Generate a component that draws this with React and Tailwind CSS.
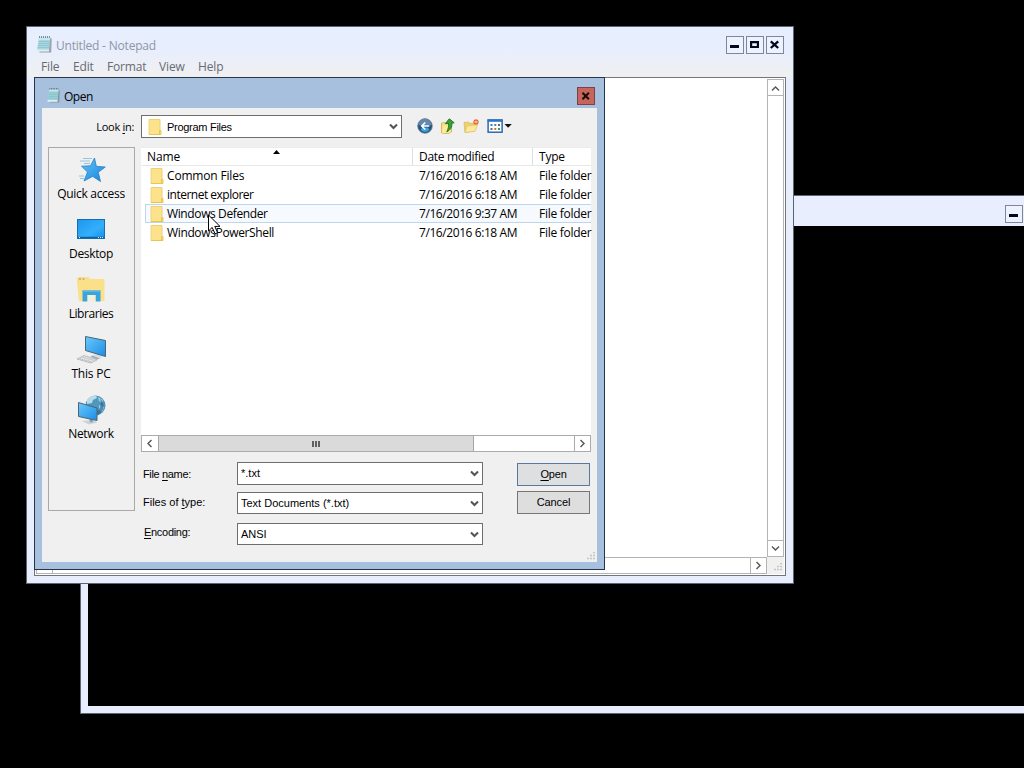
import React from 'react';
import clsx from 'clsx';

const files = [
  { name: 'Common Files', date: '7/16/2016 6:18 AM', type: 'File folder', tracking: 'tracking-[-0.18px]' },
  { name: 'internet explorer', date: '7/16/2016 6:18 AM', type: 'File folder', tracking: 'tracking-[-0.5px]' },
  { name: 'Windows Defender', date: '7/16/2016 9:37 AM', type: 'File folder', tracking: 'tracking-[-0.38px]', hover: true },
  { name: 'WindowsPowerShell', date: '7/16/2016 6:18 AM', type: 'File folder', tracking: 'tracking-[-0.36px]' },
];

const NotepadIcon = ({ className }) => (
  <svg viewBox="0 0 16 17" preserveAspectRatio="none" className={className}>
    <path d="M14 2L15.7 2.5L15.2 16.5L4 16.5L3 15.5Z" fill="#8d959c" />
    <path d="M3 1.5H14.3L13 15H0.8Z" fill="#9fd3dc" />
    <path d="M3 1.5H14.3L14 4H2.6Z" fill="#c3e6ec" />
    <path d="M2.6 5.5H13.6M2.4 7.5H13.4M2.1 9.5H13.2M1.8 11.5H13" stroke="#79b8c6" strokeWidth="0.7" />
    <path d="M0.8 13.5L13 13.8L12.9 15.5H0.6Z" fill="#dff2f4" />
    <path d="M3 1H15" stroke="#4b5a68" strokeWidth="1.6" strokeDasharray="1 1" />
  </svg>
);

const FolderIcon = ({ className }) => (
  <svg viewBox="0 0 14 16" className={className}>
    <path d="M1 0.5H12V11H13V15.5H1Z" fill="#fbe28b" />
    <path d="M1 0.5H12V11" fill="none" stroke="#ecd07a" strokeWidth="1" />
    <path d="M0.8 15.5H13V11.5H11.5V15" fill="none" stroke="#e8c54c" strokeWidth="1" />
    <path d="M1 0.5V15" stroke="#edcf74" strokeWidth="0.8" />
  </svg>
);

const Chevron = ({ className, d = 'M1 1.5L4.5 5L8 1.5', width = 2.1 }) => (
  <svg viewBox="0 0 9 7" className={clsx('h-[7px] w-[9px]', className)}>
    <path d={d} fill="none" stroke="#555" strokeWidth={width} />
  </svg>
);

const StarIcon = () => (
  <svg viewBox="0 0 32 32" className="h-8 w-8">
    <defs>
      <linearGradient id="star" x1="0" y1="0" x2="1" y2="1">
        <stop offset="0" stopColor="#62c5fb" />
        <stop offset="1" stopColor="#1583db" />
      </linearGradient>
    </defs>
    <path d="M8 4.5H17M5 7H15M9 9.5H15M4 22H9M5 24.5H9" stroke="#8fbcdc" strokeWidth="0.9" />
    <path d="M19.5 4L21.3 12.3L30.3 13L23.3 18.3L25.5 27.5L17.7 22.4L9 27L12.5 18L6.5 12.2L15.5 11.8Z" fill="url(#star)" stroke="#2d7fbf" strokeWidth="0.8" />
  </svg>
);

const DesktopIcon = () => (
  <svg viewBox="0 0 32 32" className="h-8 w-8">
    <defs>
      <linearGradient id="desk" x1="0" y1="0" x2="1" y2="1">
        <stop offset="0" stopColor="#1c96ee" />
        <stop offset="0.6" stopColor="#35aefb" />
        <stop offset="1" stopColor="#1390ee" />
      </linearGradient>
    </defs>
    <rect x="2.5" y="5.5" width="27" height="19" fill="url(#desk)" stroke="#1670b0" />
    <path d="M3 23.5H29" stroke="#0d5f9e" strokeWidth="1.4" />
    <path d="M4 23.5H6M23 23.5H28.5" stroke="#d9efff" strokeWidth="1" strokeDasharray="1 1" />
  </svg>
);

const LibrariesIcon = () => (
  <svg viewBox="0 0 32 32" className="h-8 w-8">
    <path d="M2 4.5Q2 3 3.5 3H13.5L15 5H28Q29.5 5 29.5 6.5V27H4L2 8Z" fill="#fbe08a" />
    <path d="M4 5H11" stroke="#8a8f8c" strokeWidth="1.2" strokeDasharray="2 1.5" />
    <path d="M7.5 16.5H25.5V27.5H20.5V21H12.5V27.5H7.5Z" fill="#39a5dc" />
    <path d="M7.5 16.5H25.5V18H7.5Z" fill="#55b7e6" />
    <path d="M12.5 21H20.5V28H12.5Z" fill="#f4efdc" />
  </svg>
);

const Screen = ({ id, d, stroke = '#4c6474' }) => (
  <>
    <defs>
      <linearGradient id={id} x1="0" y1="0" x2="1" y2="1">
        <stop offset="0" stopColor="#6cc9fb" />
        <stop offset="1" stopColor="#1a8de6" />
      </linearGradient>
    </defs>
    <path d={d} fill={`url(#${id})`} stroke={stroke} strokeWidth="1" />
  </>
);

const PcIcon = () => (
  <svg viewBox="0 0 32 32" className="h-8 w-8">
    <path d="M16 22L24 19L27 24L19 25.5Z" fill="#d7dde1" />
    <path d="M17 21.5L25 24.5L22 25.5L15.5 22.5Z" fill="#a4adb3" />
    <path d="M2 25L9 21.5L22 25.8L16 29Z" fill="#e4e7e9" stroke="#a9afb3" strokeWidth="0.8" />
    <path d="M5 24.8L17 27.8M7.5 23.2L19.3 26.5" stroke="#9aa1a6" strokeWidth="0.7" strokeDasharray="1.3 0.7" />
    <Screen id="pc" d="M10.5 2.5L30.5 6.5V22.5L10.5 16.5Z" />
  </svg>
);

const NetworkIcon = () => (
  <svg viewBox="0 0 32 32" className="h-8 w-8">
    <circle cx="20.5" cy="11.5" r="10" fill="#4e97bf" />
    <path d="M12 6Q15 1.5 21 1.5L22 4L18 6L17 9L12 10Z" fill="#b7dbe8" />
    <path d="M23 3L28 6L27 9L24 7ZM24 11L29 13L27 18L24 16Z" fill="#a6d0e0" />
    <path d="M25 4.5A10 10 0 0 1 22 21.3L20 19Q28 14 25 4.5Z" fill="#27638c" opacity="0.65" />
    <path d="M7 27L19 26L22 28.5L14 30.5Z" fill="#c8d2d8" />
    <path d="M14 24L18 25.5L17.5 28.5L15 28Z" fill="#8e9ba3" />
    <Screen id="net" d="M3.5 8.5L22 14V26.5L3.5 22.5Z" />
  </svg>
);

const places = [
  { label: 'Quick access', icon: <StarIcon />, tracking: 'tracking-[-0.3px]' },
  { label: 'Desktop', icon: <DesktopIcon />, tracking: 'tracking-[-0.35px]' },
  { label: 'Libraries', icon: <LibrariesIcon />, tracking: 'tracking-[-0.45px]' },
  { label: 'This PC', icon: <PcIcon />, tracking: 'tracking-[-0.2px]' },
  { label: 'Network', icon: <NetworkIcon />, tracking: 'tracking-[-0.3px]' },
];

const BackIcon = () => (
  <svg viewBox="0 0 16 16" className="h-4 w-4">
    <circle cx="8" cy="8" r="7.3" fill="#24527f" stroke="#6f8496" strokeWidth="0.8" />
    <path d="M1.5 7A6.5 6.5 0 0 1 14.5 7Q8 9 1.5 7Z" fill="#6687a8" />
    <path d="M3.5 12Q8 16 12.5 12L11 9.5H5Z" fill="#37a2dc" />
    <path d="M8.3 4.5L4.8 8L8.3 11.5M5 8H12.3" fill="none" stroke="#fff" strokeWidth="1.7" />
  </svg>
);

const UpIcon = () => (
  <svg viewBox="0 0 16 16" className="h-4 w-4">
    <path d="M1.5 5L4.5 4.5L6 5.8L11.5 5V14L8 15.7L1.5 15Z" fill="#f7e07c" stroke="#d2ae45" strokeWidth="0.8" />
    <path d="M3 8L11.8 7L10 14.8L2 15Z" fill="#fbec9c" />
    <path d="M9.3 0.8L14.2 4.8L11.8 5.2C12.3 9 10.5 12 6.8 13.8C8.3 10.5 9 8 8.3 5.4L5.3 5.6Z" fill="#3da035" stroke="#1d6e26" strokeWidth="0.9" />
  </svg>
);

const NewFolderIcon = () => (
  <svg viewBox="0 0 16 16" className="h-4 w-4">
    <path d="M1 4.5L5.5 4L6.5 5.5L12 5L11.5 13L2 14.5Z" fill="#f0d170" stroke="#d6b350" strokeWidth="0.7" />
    <path d="M2 14.5L4 8L14.5 6.8L12 13.3Z" fill="#fbe9a0" stroke="#dfbf5c" strokeWidth="0.7" />
    <path d="M13 1V7M10 4H16M10.9 1.9L15.1 6.1M15.1 1.9L10.9 6.1" stroke="#e4572e" strokeWidth="1.1" />
    <circle cx="13" cy="4" r="1.3" fill="#ffc36b" />
  </svg>
);

const ViewsIcon = () => (
  <svg viewBox="0 0 25 16" className="h-4 w-[25px]">
    <rect x="1.1" y="2" width="14" height="12.2" fill="#fff" stroke="#1f5fa9" strokeWidth="1.4" />
    <rect x="0.5" y="1.4" width="15.2" height="2.4" fill="#2f75c4" />
    <path d="M3.5 7H5.5M7.3 7H9.3" stroke="#3d86c2" strokeWidth="2" />
    <path d="M11 7H13M3.5 11H5.5" stroke="#5b6d7c" strokeWidth="2" />
    <path d="M7.3 11H9.3" stroke="#d0713b" strokeWidth="2" />
    <path d="M11 11H13" stroke="#3f9b5a" strokeWidth="2" />
    <path d="M17.5 6H24.8L21.1 9.8Z" fill="#111" />
  </svg>
);

const Grip = () => (
  <svg viewBox="0 0 9 9" className="h-[9px] w-[9px]">
    <path d="M7 0.5H9M7 3.5H9M4 3.5H6M7 6.5H9M4 6.5H6M1 6.5H3" stroke="#c4c4c4" strokeWidth="1.6" />
  </svg>
);

const CaptionButton = ({ kind }) => (
  <div className="flex h-[18px] w-[18px] items-center justify-center border border-[#7c879b] bg-[#edf2fe]">
    <svg viewBox="0 0 10 10" className="h-[10px] w-[10px]">
      {kind === 'min' && <path d="M0 6.5H9" stroke="#000820" strokeWidth="3" />}
      {kind === 'max' && <path d="M0 1H9V8H0ZM2.2 3.2V6H6.8V3.2Z" fill="#000820" fillRule="evenodd" />}
      {kind === 'close' && <path d="M0.8 1.3L8.2 8M8.2 1.3L0.8 8" stroke="#000820" strokeWidth="2.3" />}
    </svg>
  </div>
);

const ComboBox = ({ children, className }) => (
  <div className={clsx('flex items-center border border-[#6f6f6f] bg-white pl-[3px] pr-[3px]', className)}>
    <div className="flex flex-1 items-center">{children}</div>
    <Chevron />
  </div>
);

const ConsoleWindow = () => (
  <div className="absolute left-[80px] top-[195px] flex h-[519px] w-[960px] flex-col border border-[#5e6472] bg-[#e8eefd] pb-[7px] pl-[7px]">
    <div className="flex h-[30px] items-start pl-[917px] pt-[9px]">
      <CaptionButton kind="min" />
    </div>
    <div className="flex-1 bg-black" />
  </div>
);

const Notepad = () => (
  <div className="absolute left-[26px] top-[26px] flex h-[558px] w-[768px] flex-col border border-[#5d6475] bg-[#e8eefc] px-[7px] pb-[7px]">
    <div className="-mx-[7px] flex h-[50px] flex-col bg-linear-to-b from-[#e7eefe] from-40% to-[#f0f0f0] px-[7px]">
      <div className="flex h-[30px] pt-[9px]">
        <NotepadIcon className="ml-[2px] h-[17px] w-4 opacity-85" />
        <span className="ml-1 flex-1 text-[12px] leading-[20px] tracking-[-0.2px] text-[#8f96a3]">Untitled - Notepad</span>
        <div className="mr-[2px] flex gap-[2px]">
          <CaptionButton kind="min" />
          <CaptionButton kind="max" />
          <CaptionButton kind="close" />
        </div>
      </div>
      <div className="flex h-5 pl-[7px] text-[12px] leading-[20px] tracking-[-0.15px] text-[#666b73]">
        <span className="w-8">File</span>
        <span className="w-[34px]">Edit</span>
        <span className="w-[52px]">Format</span>
        <span className="w-[39px]">View</span>
        <span>Help</span>
      </div>
    </div>
    <div className="flex flex-1 flex-col border border-[#70757e] bg-white p-px">
      <div className="flex flex-1 justify-end">
        <div className="flex w-[17px] flex-col justify-between border border-[#b4b4b4] bg-white">
          <div className="flex h-4 items-center justify-center border-b border-[#b4b4b4]">
            <Chevron className="mt-px" d="M1 5.5L4.5 2L8 5.5" width={1.4} />
          </div>
          <div className="flex h-4 items-center justify-center border-t border-[#b4b4b4]">
            <Chevron width={1.4} />
          </div>
        </div>
      </div>
      <div className="flex h-[17px]">
        <div className="flex flex-1 justify-between border border-[#b4b4b4]">
          <div className="w-4 border-r border-[#b4b4b4]" />
          <div className="flex w-4 items-center justify-center border-l border-[#b4b4b4]">
            <Chevron className="-rotate-90" width={1.4} />
          </div>
        </div>
        <div className="flex w-[17px] items-end justify-end bg-[#f0f0f0] p-[2px]">
          <Grip />
        </div>
      </div>
    </div>
  </div>
);

const FileList = () => (
  <div className="flex h-[305px] w-[450px] flex-col bg-white text-[12px] leading-[19px]">
    <div className="flex h-[19px] border-b border-t border-b-[#e8e8e8] border-t-[#ececec] leading-[18px]">
      <div className="flex w-[272px] items-start border-r border-[#dedede] pl-[6px]">
        <span className="w-[126px] tracking-[-0.1px]">Name</span>
        <svg viewBox="0 0 7 4" className="mt-[2px] h-1 w-[7px]">
          <path d="M0 4L3.5 0L7 4Z" fill="#000" />
        </svg>
      </div>
      <div className="w-[120px] border-r border-[#dedede] pl-[6px] tracking-[-0.32px]">Date modified</div>
      <div className="pl-[6px] tracking-[-0.2px]">Type</div>
    </div>
    <div className="flex flex-1 flex-col">
      {files.map((file) => (
        <div
          key={file.name}
          className={clsx(
            'ml-1 flex h-[19px] items-center whitespace-nowrap border-y border-l',
            file.hover ? 'border-[#bdd6ee] bg-[#f6fafe]' : 'border-transparent'
          )}
        >
          <FolderIcon className="ml-1 h-4 w-[14px] shrink-0" />
          <span className={clsx('ml-[3px] w-[252px] shrink-0', file.tracking)}>{file.name}</span>
          <span className="w-[120px] shrink-0 tracking-[-0.42px]">{file.date}</span>
          <span className="w-[52px] shrink-0 tracking-[-0.28px]">{file.type}</span>
        </div>
      ))}
    </div>
    <div className="flex h-[17px] border border-[#ababab]">
      <div className="flex w-4 items-center justify-center">
        <Chevron className="-ml-px rotate-90" width={1.4} />
      </div>
      <div className="flex w-[316px] items-center justify-center gap-px border-x border-[#a6a6a6] bg-[#dadada] pr-px">
        <div className="h-[6px] w-[2px] bg-[#606060]" />
        <div className="h-[6px] w-[2px] bg-[#606060]" />
        <div className="h-[6px] w-[2px] bg-[#606060]" />
      </div>
      <div className="flex-1" />
      <div className="flex w-4 items-center justify-center border-l border-[#ababab]">
        <Chevron className="-rotate-90" width={1.4} />
      </div>
    </div>
  </div>
);

const OpenDialog = () => (
  <div className="absolute left-[34px] top-[77px] flex h-[493px] w-[571px] flex-col border border-[#28344a] bg-[#a6c0dd] px-[7px] pb-[7px] text-black">
    <div className="flex h-[30px] pl-[5px] pt-[9px]">
      <NotepadIcon className="mt-px h-[15px] w-[13px]" />
      <span className="ml-1 flex-1 text-[12px] leading-[20px] tracking-[-0.5px]">Open</span>
      <div className="mr-[2px] flex h-[18px] w-[18px] items-center justify-center border border-[#7e4048] bg-[#c5655b]">
        <svg viewBox="0 0 8 8" className="h-2 w-2">
          <path d="M0.5 0.8L6.9 7.2M6.9 0.8L0.5 7.2" stroke="#1b0808" strokeWidth="2" />
        </svg>
      </div>
    </div>
    <div className="flex flex-1 flex-col bg-[#f0f0f0] pt-[7px]">
      <div className="flex h-[23px]">
        <span className="w-[92px] text-right text-[11px] leading-[24px] tracking-[-0.3px]">
          Look <u className="underline-offset-2">i</u>n:
        </span>
        <ComboBox className="ml-[7px] h-[23px] w-[261px]">
          <FolderIcon className="ml-[3px] h-4 w-[14px]" />
          <span className="ml-[5px] font-['Liberation_Sans',sans-serif] text-[11px] leading-[20px] tracking-[-0.28px]">Program Files</span>
        </ComboBox>
        <div className="flex items-center pb-px pl-[15px]">
          <BackIcon />
          <div className="ml-[7px]"><UpIcon /></div>
          <div className="ml-[7px]"><NewFolderIcon /></div>
          <div className="ml-[8px]"><ViewsIcon /></div>
        </div>
      </div>
      <div className="mt-[9px] flex">
        <div className="ml-[6px] flex h-[364px] w-[87px] flex-col border border-[#a9a9a9] pr-px pt-[6px]">
          {places.map((place) => (
            <div key={place.label} className="flex h-[60px] flex-col items-center whitespace-nowrap">
              {place.icon}
              <span className={clsx('text-[12px] leading-[16px]', place.tracking)}>{place.label}</span>
            </div>
          ))}
        </div>
        <div className="ml-[6px] flex flex-col">
          <FileList />
          <div className="flex font-['Liberation_Sans',sans-serif] text-[11px]">
            <div className="flex w-[342px] flex-col pt-[10px]">
              <div className="flex h-[23px]">
                <span className="w-24 pl-[2px] leading-[24px] tracking-[-0.35px]">File <u className="underline-offset-2">n</u>ame:</span>
                <ComboBox className="h-[23px] w-[246px]">*.txt</ComboBox>
              </div>
              <div className="mt-[7px] flex h-[22px]">
                <span className="w-24 pl-[2px] leading-[20px]">Files of <u className="underline-offset-2">t</u>ype:</span>
                <ComboBox className="h-[22px] w-[246px]">Text Documents (*.txt)</ComboBox>
              </div>
              <div className="mt-[9px] flex h-[22px]">
                <span className="w-24 pl-[3px] leading-[18px] tracking-[-0.3px]"><u className="underline-offset-2">E</u>ncoding:</span>
                <ComboBox className="h-[22px] w-[246px]">ANSI</ComboBox>
              </div>
            </div>
            <div className="ml-[34px] mt-[11px] flex w-[73px] flex-col gap-[5px] text-center leading-[21px]">
              <div className="h-[23px] border border-[#5a7899] bg-[#dedfe1] tracking-[-0.2px]"><u className="underline-offset-2">O</u>pen</div>
              <div className="h-[23px] border border-[#767676] bg-[#dedede] tracking-[-0.1px]">Cancel</div>
            </div>
          </div>
        </div>
      </div>
      <div className="mt-auto flex justify-end pb-px pr-[2px]">
        <Grip />
      </div>
    </div>
  </div>
);

const Cursor = () => (
  <svg viewBox="0 0 13 21" className="absolute left-[208px] top-[214px] h-[21px] w-[13px]">
    <path d="M0.5 1V17L4.2 13.4L7 19.8L9.6 18.7L6.8 12.4H12Z" fill="#fff" stroke="#000" strokeWidth="1" />
  </svg>
);

const App = () => {
  return (
    <div className="relative h-[768px] w-[1024px] overflow-hidden bg-black font-['Open_Sans','Noto_Sans',sans-serif]">
      <ConsoleWindow />
      <Notepad />
      <OpenDialog />
      <Cursor />
    </div>
  );
};

export default App;
